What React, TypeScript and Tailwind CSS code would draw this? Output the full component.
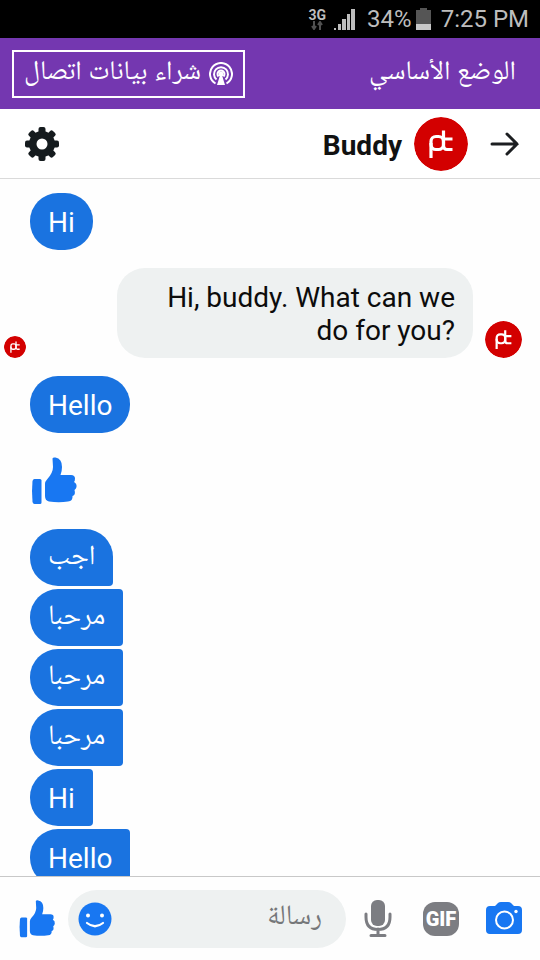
import React from 'react';

interface Message {
    id: number;
    text: string;
    shape: string;
}

const STACKED_MESSAGES: Message[] = [
    { id: 1, text: 'اجب', shape: 'rounded-[28px] rounded-br-[4px]' },
    { id: 2, text: 'مرحبا', shape: 'rounded-l-[28px] rounded-r-[4px]' },
    { id: 3, text: 'مرحبا', shape: 'rounded-l-[28px] rounded-r-[4px]' },
    { id: 4, text: 'مرحبا', shape: 'rounded-l-[28px] rounded-r-[4px]' },
    { id: 5, text: 'Hi', shape: 'rounded-l-[28px] rounded-r-[4px]' },
    { id: 6, text: 'Hello', shape: 'rounded-l-[28px] rounded-r-[4px]' },
];

const BuddyLogo: React.FC<{ className: string }> = ({ className }) => (
    <svg viewBox="0 0 54 54" className={`shrink-0 rounded-full ${className}`} aria-hidden="true">
        <circle cx="27" cy="27" r="27" fill="#d30000" />
        <g fill="none" stroke="#fff" strokeWidth="3.200">
            <path d="M17 41V26" />
            <rect x="17" y="19.500" width="12.500" height="13" rx="5" />
            <path d="M29.500 13.500V28Q29.500 32.500 33 32.500H38.500M29.500 22H38.500" />
        </g>
    </svg>
);

const ThumbIcon: React.FC<{ className: string }> = ({ className }) => (
    <svg viewBox="0 0 46 48" fill="#1877f2" className={`shrink-0 ${className}`} aria-hidden="true">
        <path d="M3.500 22H9Q10.500 22 10.500 23.500V45.500Q10.500 47 9 47H3.500Q2 47 1.500 45Q.5 34 1.500 24Q2 22 3.500 22Z" />
        <path d="M21.500 1.500Q22 0 24.500 .5Q31 1.500 31 10Q31 14 29.500 18H40Q44 18 44 21.500Q44 24 43 25Q46 26.500 45.500 30Q45 32 43.500 33Q45 38 41.500 39Q42 44 37 44.500Q28 46 18 44.500Q14 43.500 14 39V27Q14 24.500 16 22.500Q22 16 22 10Z" />
    </svg>
);

const StatusBar: React.FC = () => (
    <div dir="ltr" className="flex h-[38px] shrink-0 items-center justify-end bg-black pr-[11px] text-2xl text-[#bdbdbd]">
        <div className="mr-2 flex flex-col items-center text-sm leading-3 font-bold">
            <span>3G</span>
            <svg viewBox="0 0 12 9" className="h-[9px] w-3" fill="none" stroke="#505050" strokeWidth="2">
                <path d="M3 0V7M1 5L3 8L5 5M9 9V2M7 4L9 1L11 4" />
            </svg>
        </div>
        <svg viewBox="0 0 21 21" className="mr-3 h-[21px] w-[21px]" fill="#bdbdbd">
            <path d="M0 19h2v2H0zM4 15h3v6H4zM8 10h4v11H8zM13 5h3v16h-3zM17 0h4v21h-4z" />
        </svg>
        <span className="mr-1">34%</span>
        <svg viewBox="0 0 15 22" className="mr-[10px] h-[22px] w-[15px]">
            <path d="M4 0H11V2H15V22H0V2H4Z" fill="#555" />
            <path d="M0 16H15V22H0Z" fill="#c8c8c8" />
        </svg>
        <span>7:25 PM</span>
    </div>
);

const DataModeBar: React.FC = () => (
    <div className="flex h-[71px] shrink-0 items-center justify-between bg-[#7437b0] pr-6 pl-3 text-[27px] leading-8 text-white">
        <span>الوضع الأساسي</span>
        <button className="flex h-12 items-center gap-2 border-2 border-white px-[10px]">
            <svg viewBox="0 0 24 24" className="h-6 w-6" fill="none" stroke="#fff" strokeWidth="2" aria-hidden="true">
                <path d="M6.500 21.500A11 11 0 1 1 17.500 21.500" />
                <path d="M7.500 17.500A7 7 0 1 1 16.500 17.500" />
                <path d="M9.500 14.500A3.500 3.500 0 1 1 14.500 14.500" />
                <path d="M12 10L8 23H16Z" fill="#fff" stroke="none" />
                <circle cx="12" cy="12" r="2.500" fill="#fff" stroke="none" />
            </svg>
            <span>شراء بيانات اتصال</span>
        </button>
    </div>
);

const ChatHeader: React.FC = () => (
    <header className="flex h-[70px] shrink-0 items-center border-b border-[#dadada] bg-white px-5">
        <a href="#back" aria-label="رجوع">
            <svg viewBox="0 0 30 24" className="h-6 w-[30px]" fill="none" stroke="#1c1e21" strokeWidth="3" strokeLinecap="round">
                <path d="M2 12H27M17 2L27 12L17 22" />
            </svg>
        </a>
        <BuddyLogo className="mr-[22px] h-[54px] w-[54px]" />
        <h1 className="mr-3 pt-1 text-[28px] leading-8 font-bold text-[#111]">Buddy</h1>
        <button aria-label="الإعدادات" className="mr-auto ml-[5px]">
            <svg viewBox="-17 -17 34 34" className="h-[34px] w-[34px]" fill="#151b1e">
                {[0, 45, 90, 135].map((angle) => (
                    <rect key={angle} x="-3.500" y="-17" width="7" height="34" rx="2" transform={`rotate(${angle})`} />
                ))}
                <circle r="13" />
                <circle r="5.500" fill="#fff" />
            </svg>
        </button>
    </header>
);

const Bubble: React.FC<{ text: string; shape: string }> = ({ text, shape }) => (
    <p className={`bg-[#1a73e0] px-[18px] pt-[13px] pb-[11px] text-[28px] leading-[33px] text-white ${shape}`}>{text}</p>
);

const MessageList: React.FC = () => (
    <main className="flex min-h-0 flex-1 flex-col items-end overflow-hidden pt-[14px] pl-[30px]">
        <Bubble text="Hi" shape="shrink-0 rounded-[28px]" />
        <div className="-ml-[30px] flex shrink-0 items-end justify-between self-stretch py-[18px] pr-[18px] pl-1">
            <div className="flex items-end gap-3">
                <BuddyLogo className="h-[37px] w-[37px]" />
                <p dir="ltr" className="w-[356px] rounded-[28px] bg-[#eef1f1] px-[18px] pt-[13px] pb-[11px] text-right text-[28px] leading-[33px] text-[#0c0c0c]">
                    Hi, buddy. What can we do for you?
                </p>
            </div>
            <BuddyLogo className="h-[22px] w-[22px]" />
        </div>
        <Bubble text="Hello" shape="shrink-0 rounded-[28px]" />
        <ThumbIcon className="mt-6 mb-6 h-12 w-12" />
        <div className="flex flex-col items-end gap-[3px]">
            {STACKED_MESSAGES.map((message) => (
                <Bubble key={message.id} text={message.text} shape={message.shape} />
            ))}
        </div>
    </main>
);

const Composer: React.FC = () => (
    <footer className="flex h-[84px] shrink-0 items-center border-t border-[#c8c8c8] bg-[#fefefe] px-[18px]">
        <button aria-label="الكاميرا">
            <svg viewBox="0 0 36 34" className="h-[34px] w-9" fill="none">
                <path d="M4 4H9L12 1Q13 0 15 0H22Q24 0 25 1L28 4H32Q36 4 36 8V28Q36 32 32 32H4Q0 32 0 28V8Q0 4 4 4Z" fill="#1877f2" />
                <circle cx="18.500" cy="18" r="8.500" stroke="#fff" strokeWidth="2" />
                <circle cx="30" cy="9.500" r="1.700" fill="#fff" />
            </svg>
        </button>
        <button aria-label="صورة متحركة" className="mr-[27px] flex h-[34px] w-9 items-center justify-center rounded-xl bg-[#7c7d82] text-xl font-black text-white">
            GIF
        </button>
        <button aria-label="تسجيل صوتي" className="mr-[31px]">
            <svg viewBox="0 0 28 37" className="h-[37px] w-7" fill="none" stroke="#7c7d82" strokeWidth="3">
                <rect x="7" y="0" width="14" height="26" rx="6" fill="#7c7d82" stroke="none" />
                <path d="M2 14V17Q2 29.500 14 29.500T26 17V14M14 29V35M7 35.500H21" strokeLinecap="round" />
            </svg>
        </button>
        <div className="mr-[18px] flex h-[58px] min-w-0 flex-1 items-center rounded-full bg-[#eef1f1] pr-6 pl-[10px]">
            <input aria-label="رسالة" placeholder="رسالة" className="min-w-0 flex-1 bg-transparent text-[28px] outline-none placeholder:text-[#757779]" />
            <button aria-label="رموز تعبيرية">
                <svg viewBox="0 0 34 34" className="h-[34px] w-[34px]">
                    <circle cx="17" cy="17" r="16.500" fill="#1877f2" />
                    <circle cx="10" cy="13.500" r="2" fill="#fff" />
                    <circle cx="24" cy="13.500" r="2" fill="#fff" />
                    <path d="M9 21Q17 27.500 25 21" fill="none" stroke="#fff" strokeWidth="2.200" strokeLinecap="round" />
                </svg>
            </button>
        </div>
        <button aria-label="إعجاب" className="mr-3">
            <ThumbIcon className="h-[38px] w-[38px]" />
        </button>
    </footer>
);

const App: React.FC = () => {
    return (
        <div dir="rtl" lang="ar" className="flex h-screen flex-col bg-[#fefefe] font-[Roboto,'Noto_Naskh_Arabic_UI','Noto_Naskh_Arabic','DejaVu_Sans',sans-serif]">
            <StatusBar />
            <DataModeBar />
            <ChatHeader />
            <MessageList />
            <Composer />
        </div>
    );
};

export default App;
